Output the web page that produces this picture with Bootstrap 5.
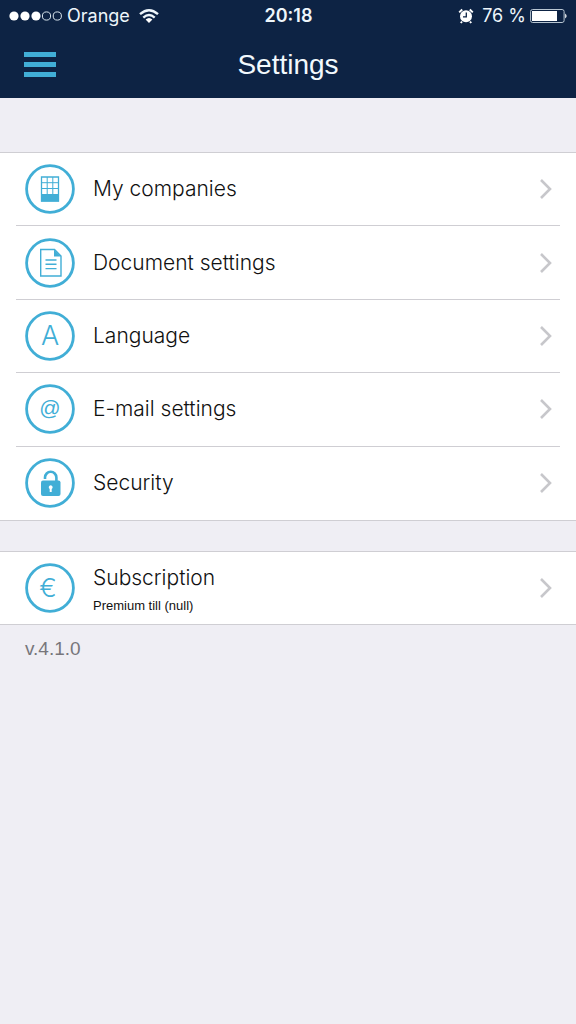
<!DOCTYPE html>
<html lang="en">
<head>
<meta charset="utf-8">
<meta name="viewport" content="width=device-width, initial-scale=1">
<title>Settings</title>
<link rel="stylesheet" href="https://cdn.jsdelivr.net/npm/bootstrap@5.3.0/dist/css/bootstrap.min.css">
<style>
  :root { --navy: #0d2344; --sky: #41aed6; --rule: #cfced3; }
  body { background: #efeef4; color: #111; font-family: Inter, "Liberation Sans", Arial, sans-serif; }
  .app-head { background: var(--navy); color: #fff; height: 98px; }
  .status { height: 32px; padding: 0 8px 0 9px; font-size: 18px; line-height: 32px; color: #eef6fb; }
  .status > * { flex: 1 1 0; }
  .clock { font-weight: 600; }
  .title-bar { height: 66px; padding: 0 24px; display: grid; grid-template-columns: 1fr auto 1fr; align-items: center; }
  .title-bar h1 { font-family: "Liberation Sans", Arial, sans-serif; font-size: 28px; line-height: 32px; color: #f2f9fd; }
  .menu-btn { width: 32px; height: 26px; line-height: 0; color: var(--sky); }
  .settings { margin-top: 54px; background: #fff; border-top: 1px solid var(--rule); border-bottom: 1px solid var(--rule); display: grid; grid-auto-rows: 1fr; }
  .main-list { min-height: 369px; }
  .extra-list { margin-top: 30px; min-height: 74px; }
  .settings li { display: flex; padding: 0 16px; }
  .settings a { flex: 1; display: flex; align-items: center; color: inherit; text-decoration: none; padding: 0 8px 0 9px; }
  .settings li:not(:last-child) a { border-bottom: 1px solid var(--rule); }
  .label { font-size: 21px; font-weight: 300; line-height: 28px; margin-left: 18px; }
  .note { display: block; font-family: "Liberation Sans", Arial, sans-serif; font-size: 13px; line-height: 20px; margin-top: 4px; }
  .extra-list .label { padding-top: 3px; }
  .version { font-family: "Liberation Sans", Arial, sans-serif; font-size: 19px; line-height: 24px; color: #77767b; margin: 12px 25px; }
  .disc { width: 50px; height: 50px; flex: none; color: var(--sky); }
  .disc text { font-family: Inter, "Liberation Sans", sans-serif; font-weight: 300; fill: currentColor; text-anchor: middle; }
  .disc .at-sign { font-family: "Liberation Sans", Arial, sans-serif; }
  .chev { flex: none; margin-left: auto; color: #c7c7cb; }
</style>
</head>
<body>
<header class="app-head">
  <div class="status d-flex align-items-center">
    <div class="d-flex align-items-center">
      <svg width="54" height="12" viewBox="0 0 54 12" aria-hidden="true"><g fill="#fff"><circle cx="5" cy="6" r="4.6"/><circle cx="16" cy="6" r="4.6"/><circle cx="27" cy="6" r="4.6"/></g><g fill="none" stroke="#dce8f0"><circle cx="37.500" cy="6" r="4.100"/><circle cx="48.300" cy="6" r="4.100"/></g></svg>
      <span class="ms-1">Orange</span>
      <svg class="ms-2" width="22" height="16" viewBox="0 0 22 16" aria-hidden="true"><g fill="none" stroke="#eef6fb" stroke-width="2.400"><path d="M2 6.200Q11-1.800 20 6.200"/><path d="M5.300 9.600Q11 4.600 16.700 9.600"/></g><path d="M7.600 11.600Q11 8.600 14.400 11.600L11 15Z" fill="#fff"/></svg>
    </div>
    <div class="clock text-center">20:18</div>
    <div class="d-flex align-items-center justify-content-end">
      <svg width="16" height="16" viewBox="0 0 16 16" aria-hidden="true"><circle cx="8" cy="8.300" r="6" fill="#fff"/><path d="M1.200 4.400 4.200 1.500M14.800 4.400 11.800 1.500M4 13.500 2.800 15M12 13.500 13.200 15" stroke="#fff" stroke-width="2"/><path d="M8.300 4.500V8.800H5" fill="none" stroke="#0d2344" stroke-width="1.300"/></svg>
      <span class="ms-2 me-1">76 %</span>
      <svg width="38" height="16" viewBox="0 0 38 16" aria-hidden="true"><rect x=".6" y="1.500" width="33.500" height="13" rx="2" fill="none" stroke="#b8c6d2"/><rect x="2" y="3" width="25" height="10" fill="#fff"/><path d="M35.200 5.500Q38 8 35.200 10.500Z" fill="#fff"/></svg>
    </div>
  </div>
  <div class="title-bar">
    <button type="button" class="menu-btn border-0 bg-transparent p-0" aria-label="Menu">
      <svg width="32" height="26" viewBox="0 0 32 26" aria-hidden="true"><path d="M0 0H32V5H0ZM0 10H32V15H0ZM0 20H32V25H0Z" fill="currentColor"/></svg>
    </button>
    <h1 class="m-0 fw-normal">Settings</h1>
  </div>
</header>
<main>
  <ul class="settings main-list list-unstyled mb-0">
    <li><a href="#companies">
      <svg class="disc" viewBox="0 0 50 50" aria-hidden="true"><circle cx="25" cy="25" r="23.400" fill="none" stroke="currentColor" stroke-width="2.800"/><path d="M16.500 13H33.500V37H16.500Z" fill="none" stroke="currentColor" stroke-width="1.300"/><path d="M22.200 13V31M27.800 13V31M16 18.700H34M16 24.500H34" stroke="currentColor" stroke-width="1"/><path d="M16 30H34V37.500H16Z" fill="currentColor"/></svg>
      <span class="label">My companies</span>
      <svg class="chev" width="12" height="20" viewBox="0 0 12 20" aria-hidden="true"><path d="M1 1 10 10 1 19" fill="none" stroke="currentColor" stroke-width="2.600"/></svg></a></li>
    <li><a href="#documents">
      <svg class="disc" viewBox="0 0 50 50" aria-hidden="true"><circle cx="25" cy="25" r="23.400" fill="none" stroke="currentColor" stroke-width="2.800"/><path d="M15.700 11.500H29.500L36 18V38H15.700Z" fill="none" stroke="currentColor" stroke-width="1.400"/><path d="M29 11.500 36 18.500H29Z" fill="currentColor"/><path d="M20.500 22H31.500M20.500 26.300H31.500M20.500 30.600H31.500" stroke="currentColor" stroke-width="1.400"/></svg>
      <span class="label">Document settings</span>
      <svg class="chev" width="12" height="20" viewBox="0 0 12 20" aria-hidden="true"><path d="M1 1 10 10 1 19" fill="none" stroke="currentColor" stroke-width="2.600"/></svg></a></li>
    <li><a href="#language">
      <svg class="disc" viewBox="0 0 50 50" aria-hidden="true"><circle cx="25" cy="25" r="23.400" fill="none" stroke="currentColor" stroke-width="2.800"/><text x="25" y="34" font-size="27">A</text></svg>
      <span class="label">Language</span>
      <svg class="chev" width="12" height="20" viewBox="0 0 12 20" aria-hidden="true"><path d="M1 1 10 10 1 19" fill="none" stroke="currentColor" stroke-width="2.600"/></svg></a></li>
    <li><a href="#email">
      <svg class="disc" viewBox="0 0 50 50" aria-hidden="true"><circle cx="25" cy="25" r="23.400" fill="none" stroke="currentColor" stroke-width="2.800"/><text class="at-sign" x="25" y="31" font-size="21">@</text></svg>
      <span class="label">E-mail settings</span>
      <svg class="chev" width="12" height="20" viewBox="0 0 12 20" aria-hidden="true"><path d="M1 1 10 10 1 19" fill="none" stroke="currentColor" stroke-width="2.600"/></svg></a></li>
    <li><a href="#security">
      <svg class="disc" viewBox="0 0 50 50" aria-hidden="true"><circle cx="25" cy="25" r="23.400" fill="none" stroke="currentColor" stroke-width="2.800"/><rect x="16" y="22.500" width="19.500" height="15.500" rx="2" fill="currentColor"/><path d="M20 21V19.500A5.700 5.700 0 0 1 31.400 19.500V23" fill="none" stroke="currentColor" stroke-width="2.600"/><path d="M25.700 27.300A2 2 0 0 1 26.700 31V34H24.700V31A2 2 0 0 1 25.700 27.300Z" fill="#fff"/></svg>
      <span class="label">Security</span>
      <svg class="chev" width="12" height="20" viewBox="0 0 12 20" aria-hidden="true"><path d="M1 1 10 10 1 19" fill="none" stroke="currentColor" stroke-width="2.600"/></svg></a></li>
  </ul>
  <ul class="settings extra-list list-unstyled mb-0">
    <li><a href="#subscription">
      <svg class="disc" viewBox="0 0 50 50" aria-hidden="true"><circle cx="25" cy="25" r="23.400" fill="none" stroke="currentColor" stroke-width="2.800"/><text x="23" y="34" font-size="26">€</text></svg>
      <span class="label">Subscription<small class="note">Premium till (null)</small></span>
      <svg class="chev" width="12" height="20" viewBox="0 0 12 20" aria-hidden="true"><path d="M1 1 10 10 1 19" fill="none" stroke="currentColor" stroke-width="2.600"/></svg></a></li>
  </ul>
  <p class="version">v.4.1.0</p>
</main>
<script src="https://cdn.jsdelivr.net/npm/bootstrap@5.3.0/dist/js/bootstrap.bundle.min.js"></script>
</body>
</html>
